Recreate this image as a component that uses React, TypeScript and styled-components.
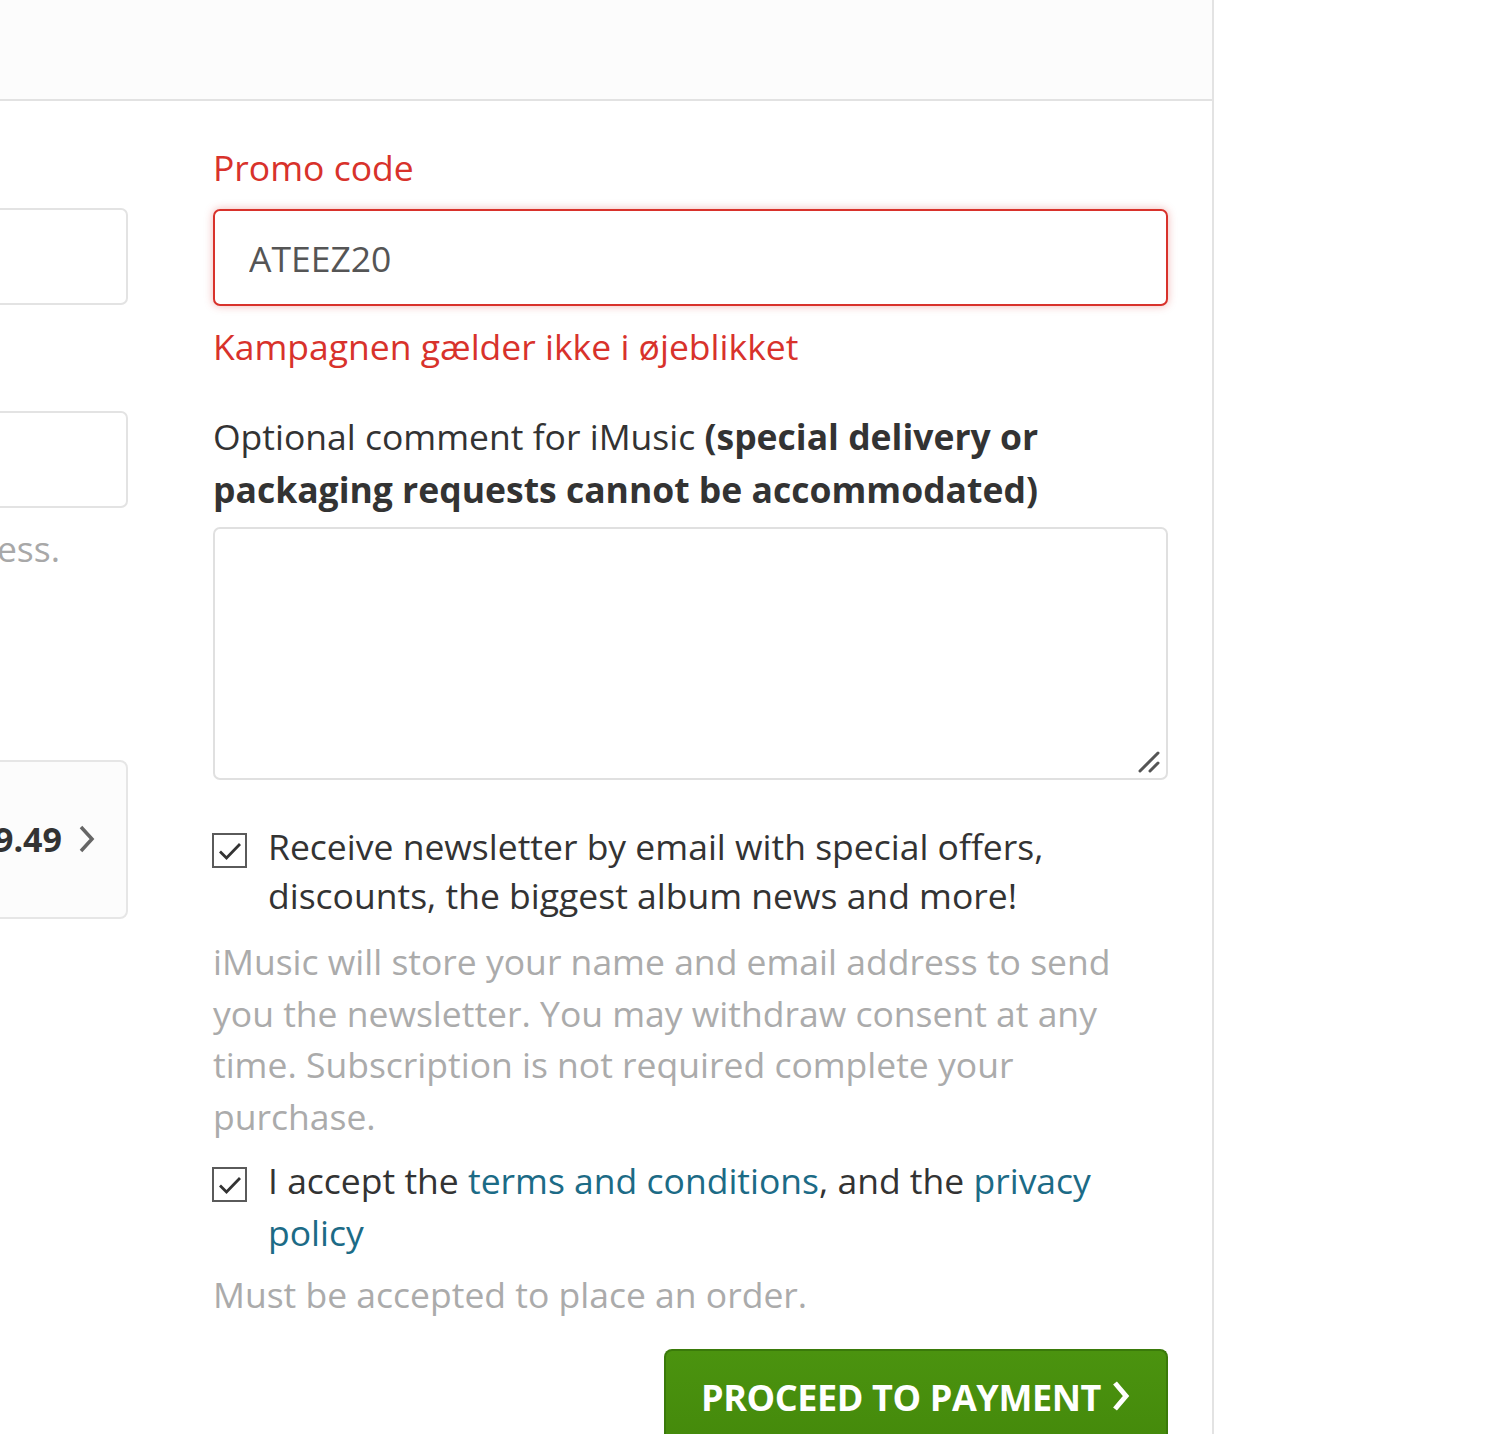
import React from "react";
import styled, { createGlobalStyle } from "styled-components";

const FS = "35.5px";

const Global = createGlobalStyle`
  html, body { margin: 0; padding: 0; background: #ffffff; }
  body { font-family: "Open Sans", "Noto Sans", sans-serif; color: #333333; }
  * { box-sizing: border-box; }
`;

const Page = styled.div`
  width: 1214px;
  min-height: 1434px;
  border-right: 2px solid #e3e3e3;
  display: flex;
  flex-direction: column;
`;

const TopBand = styled.div`
  height: 101px;
  background: #fcfcfc;
  border-bottom: 2px solid #e2e2e2;
`;

const Body = styled.div`
  display: flex;
  gap: 85px;
  padding-right: 44px;
`;

const LeftCol = styled.div`
  width: 128px;
  flex-shrink: 0;
  overflow: hidden;
  display: flex;
  flex-direction: column;
  align-items: flex-end;
  padding-top: 107px;
`;

const GhostInput = styled.div<{ $mt?: number }>`
  width: 520px;
  flex-shrink: 0;
  height: 97px;
  margin-top: ${(p) => p.$mt ?? 0}px;
  border: 2px solid #e3e3e3;
  border-radius: 7px;
  background: #fff;
`;

const GhostHint = styled.div`
  white-space: nowrap;
  font-size: ${FS};
  line-height: 51px;
  color: #a8a8a8;
  padding-right: 68px;
  margin-top: 15px;
`;

const PriceBox = styled.div`
  width: 520px;
  flex-shrink: 0;
  height: 159px;
  margin-top: 186px;
  border: 2px solid #e6e6e6;
  border-radius: 8px;
  background: #fcfcfc;
  display: flex;
  align-items: center;
  justify-content: flex-end;
  gap: 16px;
  padding-right: 30px;
  padding-bottom: 2px;
`;

const Price = styled.span`
  font-size: 34px;
  font-weight: 700;
  color: #333;
`;

const RightCol = styled.div`
  flex: 1;
  display: flex;
  flex-direction: column;
  padding-top: 41px;
`;

const Label = styled.label<{ $error?: boolean; $lh?: number }>`
  display: block;
  font-size: ${FS};
  line-height: ${(p) => p.$lh ?? 51}px;
  color: ${(p) => (p.$error ? "#d8322b" : "#333")};
  b { font-weight: 700; }
`;

const PromoInput = styled.input`
  margin-top: 16px;
  height: 97px;
  width: 100%;
  border: 2px solid #d8322b;
  border-radius: 7px;
  box-shadow: 0 0 8px rgba(216, 50, 43, 0.35);
  padding: 0 34px;
  font-family: inherit;
  font-size: ${FS};
  color: #555;
  outline: none;
  background: #fff;
`;

const ErrorText = styled.div`
  margin-top: 15px;
  font-size: ${FS};
  line-height: 51px;
  color: #d8322b;
`;

const CommentLabel = styled(Label)`
  margin-top: 38px;
`;

const AreaWrap = styled.div`
  position: relative;
  margin-top: 11px;
`;

const Area = styled.textarea`
  display: block;
  width: 100%;
  height: 253px;
  border: 2px solid #e0e0e0;
  border-radius: 7px;
  resize: none;
  outline: none;
  font-family: inherit;
  font-size: ${FS};
`;

const Grip = styled.svg`
  position: absolute;
  right: 6px;
  bottom: 5px;
`;

const CheckRow = styled.div<{ $mt: number; $lh: number }>`
  display: flex;
  align-items: flex-start;
  gap: 21px;
  margin-top: ${(p) => p.$mt}px;
  font-size: ${FS};
  line-height: ${(p) => p.$lh}px;
  color: #333;
`;

const Box = styled.span<{ $top: number }>`
  flex-shrink: 0;
  width: 35px;
  height: 35px;
  margin-top: ${(p) => p.$top}px;
  margin-left: -1px;
  border: 2px solid #5a5a5a;
  background: #fff;
  display: flex;
  align-items: center;
  justify-content: center;
`;

const Link = styled.a`
  color: #1c6b86;
  text-decoration: none;
`;

const Note = styled.p<{ $mt: number }>`
  margin: ${(p) => p.$mt}px 0 0;
  font-size: ${FS};
  line-height: 51.5px;
  color: #ababab;
`;

const Actions = styled.div`
  display: flex;
  justify-content: flex-end;
  margin-top: 28px;
`;

const PayButton = styled.button`
  width: 504px;
  height: 100px;
  border: 2px solid #3a7a0a;
  border-bottom: none;
  border-radius: 8px 8px 0 0;
  background: linear-gradient(#4b930f, #44890b);
  color: #fff;
  font-family: inherit;
  font-size: 36px;
  font-weight: 700;
  letter-spacing: -0.4px;
  display: flex;
  align-items: flex-start;
  justify-content: center;
  gap: 10px;
  padding-top: 22px;
  cursor: pointer;
`;

const Check = () => (
  <svg width="24" height="20" viewBox="0 0 24 20">
    <path d="M2 10.5 L8.5 17 L22 3" fill="none" stroke="#333" strokeWidth="2.8" />
  </svg>
);

export default function App() {
  return (
    <>
      <Global />
      <Page>
        <TopBand />
        <Body>
          <LeftCol>
            <GhostInput />
            <GhostInput $mt={106} />
            <GhostHint>to this email address.</GhostHint>
            <PriceBox>
              <Price>€ 29.49</Price>
              <svg width="18" height="30" viewBox="0 0 18 30">
                <path d="M3 3 L14 15 L3 27" fill="none" stroke="#666" strokeWidth="3.5" />
              </svg>
            </PriceBox>
          </LeftCol>
          <RightCol>
            <Label $error>Promo code</Label>
            <PromoInput defaultValue="ATEEZ20" />
            <ErrorText>Kampagnen gælder ikke i øjeblikket</ErrorText>
            <CommentLabel $lh={53}>
              Optional comment for iMusic <b>(special delivery or packaging requests cannot be accommodated)</b>
            </CommentLabel>
            <AreaWrap>
              <Area />
              <Grip width="26" height="26" viewBox="0 0 26 26">
                <path d="M4 22 L22 4 M14 22 L22 14" stroke="#555" strokeWidth="3" strokeLinecap="round" />
              </Grip>
            </AreaWrap>
            <CheckRow $mt={42} $lh={49}>
              <Box $top={11}>
                <Check />
              </Box>
              <span>Receive newsletter by email with special offers, discounts, the biggest album news and more!</span>
            </CheckRow>
            <Note $mt={16}>
              iMusic will store your name and email address to send you the newsletter. You may withdraw consent at any
              time. Subscription is not required complete your purchase.
            </Note>
            <CheckRow $mt={12} $lh={52}>
              <Box $top={13}>
                <Check />
              </Box>
              <span>
                I accept the <Link href="#">terms and conditions</Link>, and the <Link href="#">privacy policy</Link>
              </span>
            </CheckRow>
            <Note $mt={11}>Must be accepted to place an order.</Note>
            <Actions>
              <PayButton>
                PROCEED TO PAYMENT
                <svg width="20" height="36" viewBox="0 0 20 36" style={{ marginTop: 6 }}>
                  <path d="M4 4 L15 17 L4 30" fill="none" stroke="#fff" strokeWidth="5" />
                </svg>
              </PayButton>
            </Actions>
          </RightCol>
        </Body>
      </Page>
    </>
  );
}
